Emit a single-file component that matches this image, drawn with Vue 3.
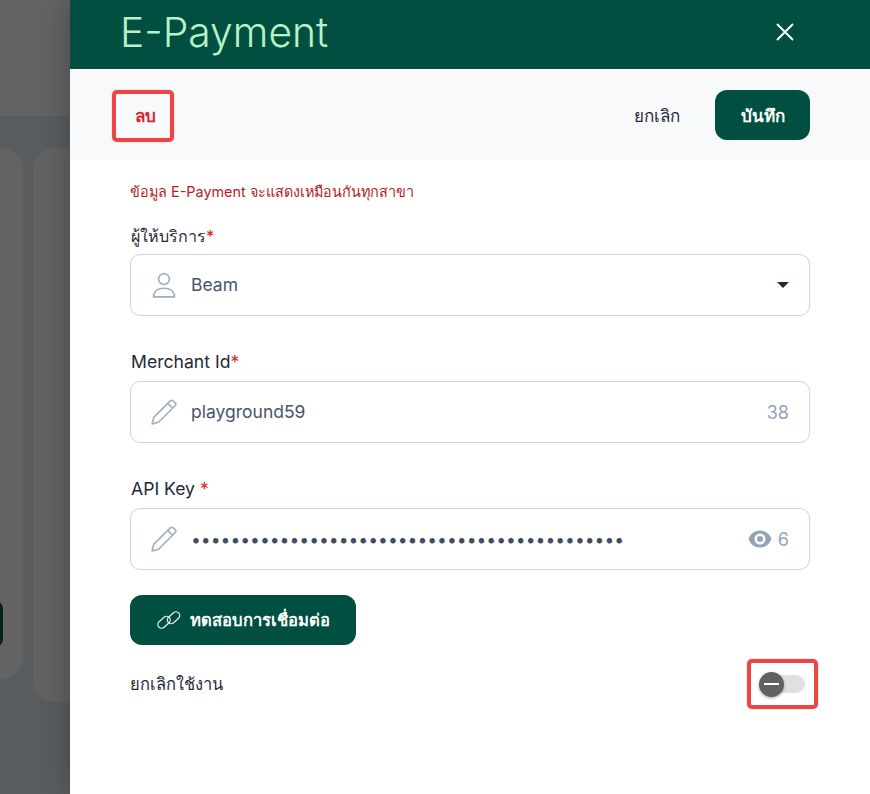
<template>
  <div class="page">
    <!-- Page behind the drawer -->
    <div class="backdrop">
      <div class="top-bar"></div>
      <div class="cards">
        <div class="card card-left"><span class="card-btn"></span></div>
        <div class="card card-right"></div>
      </div>
    </div>

    <aside class="drawer">
      <header class="drawer-head">
        <h1>E-Payment</h1>
        <button class="close-btn" aria-label="close">
          <svg width="20" height="20" viewBox="0 0 20 20" fill="none" stroke="#fff" stroke-width="2">
            <path d="M2 2 18 18M18 2 2 18" />
          </svg>
        </button>
      </header>

      <div class="toolbar">
        <button class="delete-btn">ลบ</button>
        <div class="toolbar-right">
          <button class="cancel-btn">ยกเลิก</button>
          <button class="save-btn">บันทึก</button>
        </div>
      </div>

      <div class="form">
        <p class="note">ข้อมูล E-Payment จะแสดงเหมือนกันทุกสาขา</p>

        <div class="field field-first">
          <label>ผู้ให้บริการ<span class="req">*</span></label>
          <div class="box">
            <svg class="lead" width="26" height="26" viewBox="0 0 24 24" fill="none" stroke="#a0aec0" stroke-width="1.500">
              <circle cx="12" cy="6.500" r="5" />
              <path d="M2.300 23c0-5 3.700-8 9.700-8s9.700 3 9.700 8z" stroke-linejoin="round" />
            </svg>
            <span class="value">Beam</span>
            <span class="caret"></span>
          </div>
        </div>

        <div class="field field-latin">
          <label>Merchant Id<span class="req">*</span></label>
          <div class="box">
            <svg class="lead" width="26" height="26" viewBox="0 0 24 24" fill="none" stroke="#a0aec0" stroke-width="1.500" stroke-linejoin="round">
              <path d="M1 23 2.500 17 17.800 1.800c.8-.8 2-.8 2.800 0l1.600 1.600c.8.800.8 2 0 2.800L7 21.500z" />
              <path d="M15.500 4 20 8.500" />
            </svg>
            <span class="value">playground59</span>
            <span class="count">38</span>
          </div>
        </div>

        <div class="field field-latin">
          <label>API Key <span class="req">*</span></label>
          <div class="box">
            <svg class="lead" width="26" height="26" viewBox="0 0 24 24" fill="none" stroke="#a0aec0" stroke-width="1.500" stroke-linejoin="round">
              <path d="M1 23 2.500 17 17.800 1.800c.8-.8 2-.8 2.800 0l1.600 1.600c.8.800.8 2 0 2.800L7 21.500z" />
              <path d="M15.500 4 20 8.500" />
            </svg>
            <span class="value dots">{{ dots }}</span>
            <svg class="eye" width="24" height="18" viewBox="0 0 24 18">
              <path fill="#94a3b8" fill-rule="evenodd" d="M12 .5C6.500.5 2.200 4 .5 9c1.700 5 6 8.500 11.500 8.500S21.800 14 23.500 9C21.800 4 17.500.5 12 .5zm0 14a5.500 5.500 0 1 1 0-11 5.500 5.500 0 0 1 0 11zm0-2.500a3 3 0 1 0 0-6 3 3 0 0 0 0 6z" />
            </svg>
            <span class="count">6</span>
          </div>
        </div>

        <button class="test-btn">
          <svg width="26" height="20" viewBox="0 0 26 20" fill="none" stroke="#e2e8f0" stroke-width="1.300">
            <rect x="1" y="8.500" width="14" height="7.500" rx="3.700" transform="rotate(-42 8 12.200)" />
            <rect x="10.500" y="4" width="14" height="7.500" rx="3.700" transform="rotate(-42 17.500 7.700)" />
          </svg>
          <span>ทดสอบการเชื่อมต่อ</span>
        </button>

        <div class="status-row">
          <span>ยกเลิกใช้งาน</span>
          <div class="switch-mark">
            <div class="switch">
              <span class="knob"></span>
            </div>
          </div>
        </div>
      </div>
    </aside>
  </div>
</template>

<script setup>
const dots = '•'.repeat(44)
</script>

<style>
html,
body {
  margin: 0;
  background: #fff;
}
</style>

<style scoped>
.page {
  position: relative;
  width: 870px;
  height: 794px;
  overflow: hidden;
  font-family: Inter, "Noto Sans", "DejaVu Sans", sans-serif;
}

.backdrop {
  height: 100%;
  background: #595d60;
}

.top-bar {
  height: 117px;
  background: #636363;
  border-bottom: 1px solid #55595b;
  box-sizing: border-box;
}

.cards {
  display: flex;
  gap: 10px;
  margin-left: -200px;
  padding-top: 31px;
  align-items: flex-start;
}

.card {
  position: relative;
  background: #636363;
  border-radius: 22px;
  flex: none;
}

.card-left {
  width: 223px;
  height: 531px;
}

.card-right {
  width: 300px;
  height: 554px;
}

.card-btn {
  position: absolute;
  right: 20px;
  top: 453px;
  width: 40px;
  height: 46px;
  background: #02221b;
  border-radius: 8px;
}

.drawer {
  position: absolute;
  top: 0;
  right: 0;
  bottom: 0;
  width: 800px;
  background: #fff;
  box-shadow: 0 0 30px rgba(0, 0, 0, 0.28);
}

.drawer-head {
  height: 69px;
  box-sizing: border-box;
  background: #004f40;
  display: flex;
  align-items: center;
  justify-content: space-between;
  padding: 0 75px 6px 50px;
}

.drawer-head h1 {
  margin: 0;
  font-size: 40.800px;
  font-weight: 300;
  color: #b9f1c8;
}

.close-btn {
  border: 0;
  padding: 0;
  background: none;
  display: flex;
}

.toolbar {
  height: 91px;
  box-sizing: border-box;
  background: #f8f9fb;
  display: flex;
  align-items: flex-start;
  justify-content: space-between;
  padding: 21px 60px 0 42px;
}

.toolbar button {
  font-family: inherit;
  font-size: 17px;
  font-weight: 600;
  background: none;
  border: 0;
  padding: 0;
}

.toolbar-right {
  display: flex;
  align-items: center;
  gap: 35px;
}

.delete-btn {
  width: 62px;
  height: 52px;
  box-sizing: border-box;
  border: 4px solid #ef4444 !important;
  border-radius: 5px;
  color: #d9232e;
  box-shadow: 0 0 1px #666;
  padding: 0 0 2px 4px !important;
}

.cancel-btn {
  color: #1e293b;
  font-weight: 500 !important;
}

.save-btn {
  width: 95px;
  height: 50px;
  border-radius: 12px;
  background: #004f40 !important;
  color: #fff;
}

.form {
  padding: 21px 60px 0;
}

.note {
  margin: 0;
  font-size: 14.400px;
  line-height: 22px;
  color: #b91c1c;
}

.field {
  margin-top: 32px;
}

.field-first {
  margin-top: 20px;
}

.field label {
  display: block;
  font-size: 16px;
  line-height: 26px;
  font-weight: 500;
  color: #1e293b;
  padding-left: 1px;
}

.field-latin label {
  font-size: 17.600px;
  font-weight: 400;
  padding-top: 1px;
  margin-bottom: 6px;
}

.req {
  color: #dc2626;
}

.box {
  margin-top: 5px;
  height: 62px;
  box-sizing: border-box;
  border: 1px solid #c9d3e2;
  border-radius: 10px;
  display: flex;
  align-items: center;
  padding: 0 20px;
  gap: 14px;
  color: #475569;
  font-size: 17.500px;
}

.lead {
  flex: none;
}

.value {
  flex: 1;
  min-width: 0;
  padding-bottom: 2px;
}

.dots {
  white-space: nowrap;
  color: #3f4d63;
  padding-bottom: 0;
}

.count {
  color: #94a3b8;
  font-size: 18px;
}

.eye {
  flex: none;
  margin-right: -8px;
}

.caret {
  border-left: 6.500px solid transparent;
  border-right: 6.500px solid transparent;
  border-top: 6px solid #1e293b;
}

.test-btn {
  margin-top: 25px;
  width: 226px;
  height: 50px;
  border: 0;
  border-radius: 12px;
  background: #004f40;
  color: #fff;
  font-family: inherit;
  font-size: 16.600px;
  font-weight: 600;
  display: flex;
  align-items: center;
  justify-content: center;
  gap: 8px;
}

.status-row {
  margin-top: 14px;
  display: flex;
  align-items: center;
  justify-content: space-between;
  font-size: 16.500px;
  font-weight: 500;
  color: #1e293b;
}

.switch-mark {
  width: 71px;
  height: 50px;
  margin-right: -8px;
  box-sizing: border-box;
  border: 4px solid #ef4444;
  border-radius: 5px;
  box-shadow: 0 0 1px #666;
  display: flex;
  align-items: center;
  justify-content: flex-end;
  padding-right: 9px;
}

.switch {
  position: relative;
  width: 45px;
  height: 18px;
  border-radius: 9px;
  background: #e0e0e0;
}

.knob {
  position: absolute;
  left: -1px;
  top: -3.500px;
  width: 25px;
  height: 25px;
  border-radius: 50%;
  background: #616161;
  box-shadow: 0 1px 3px rgba(0, 0, 0, 0.35);
}

.knob::after {
  content: "";
  position: absolute;
  left: 5px;
  right: 5px;
  top: 11.500px;
  height: 2px;
  background: #fff;
}
</style>
